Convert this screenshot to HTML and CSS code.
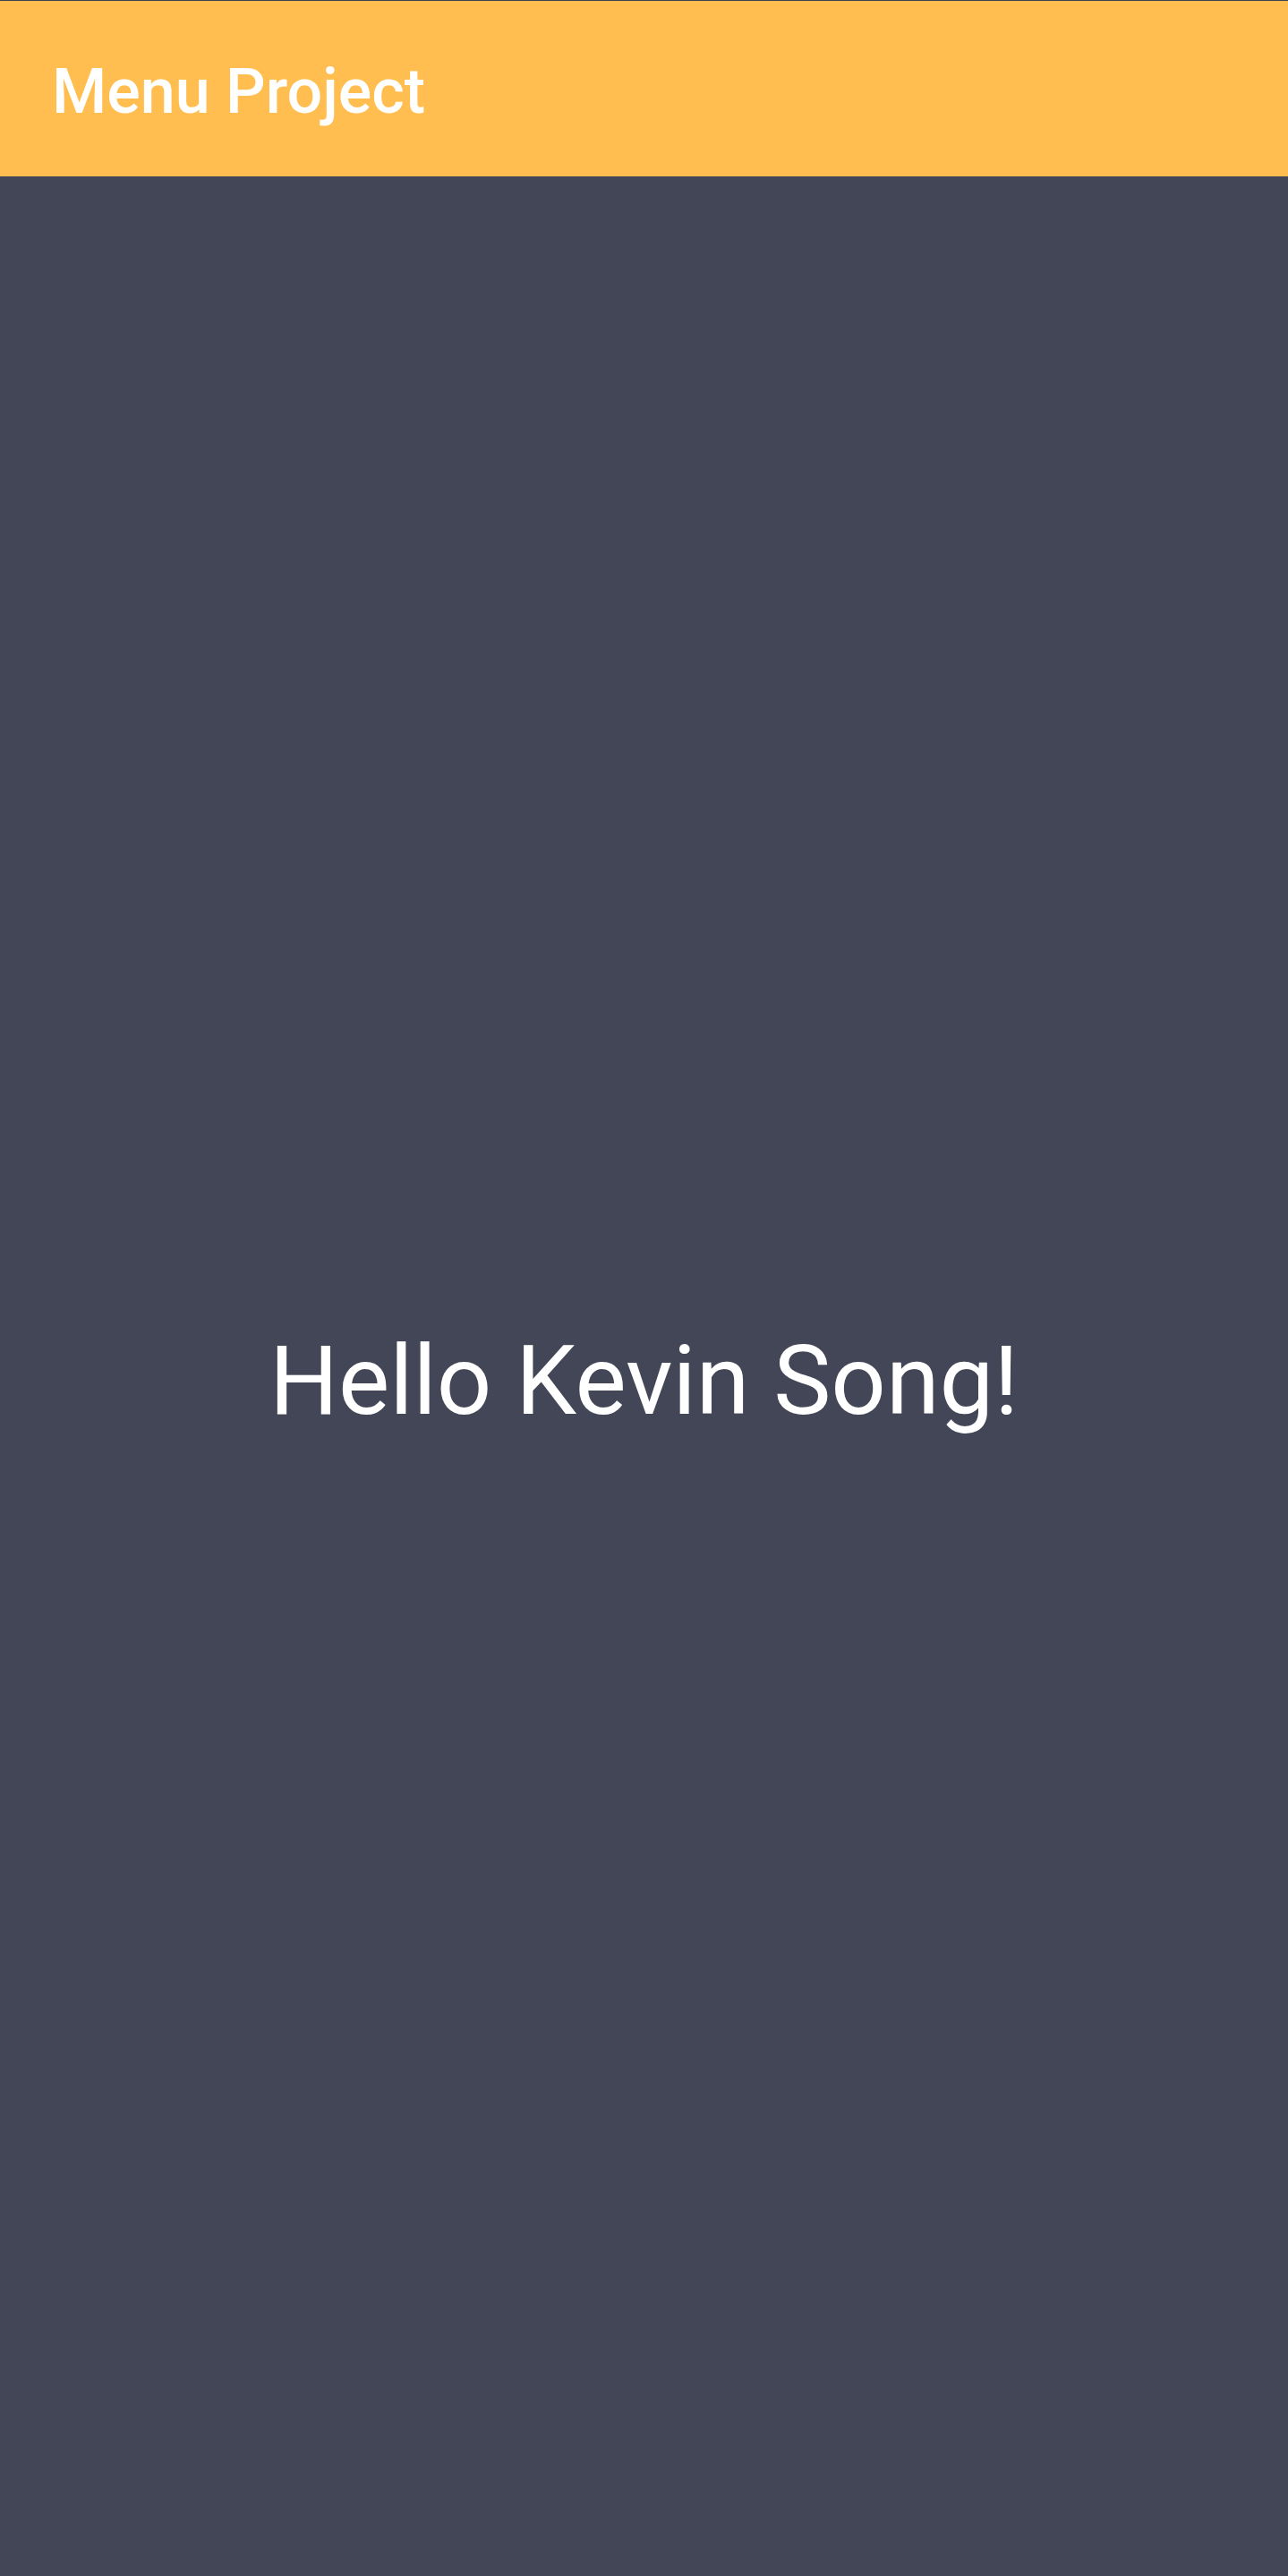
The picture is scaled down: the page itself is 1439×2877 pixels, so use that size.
FILE: index.html
```html
<!DOCTYPE html>
<html>
<head>
<meta charset="utf-8">
<link rel="stylesheet" href="styles.css">
</head>
<body>
<div class="app">
  <header class="toolbar"><h1 class="title">Menu Project</h1></header>
  <main class="content"><p class="greeting">Hello Kevin Song!</p></main>
</div>
</body>
</html>
```
FILE: styles.css
```css
html, body { margin: 0; padding: 0; }
body { background: #434656; font-family: Roboto, "Noto Sans", sans-serif; }
.app { display: flex; flex-direction: column; height: 2877px; border-top: 1px solid #3e4150; box-sizing: border-box; }
.toolbar { height: 196px; background: #ffbe4f; display: flex; align-items: center; padding: 6px 0 0 58px; box-sizing: border-box; flex: none; }
.title { margin: 0; color: #ffffff; font-size: 70px; font-weight: 500; line-height: 82px; }
.content { flex: 1; display: flex; align-items: center; justify-content: center; padding-top: 10px; }
.greeting { margin: 0; color: #ffffff; font-size: 108px; font-weight: 400; line-height: 126px; }
```
